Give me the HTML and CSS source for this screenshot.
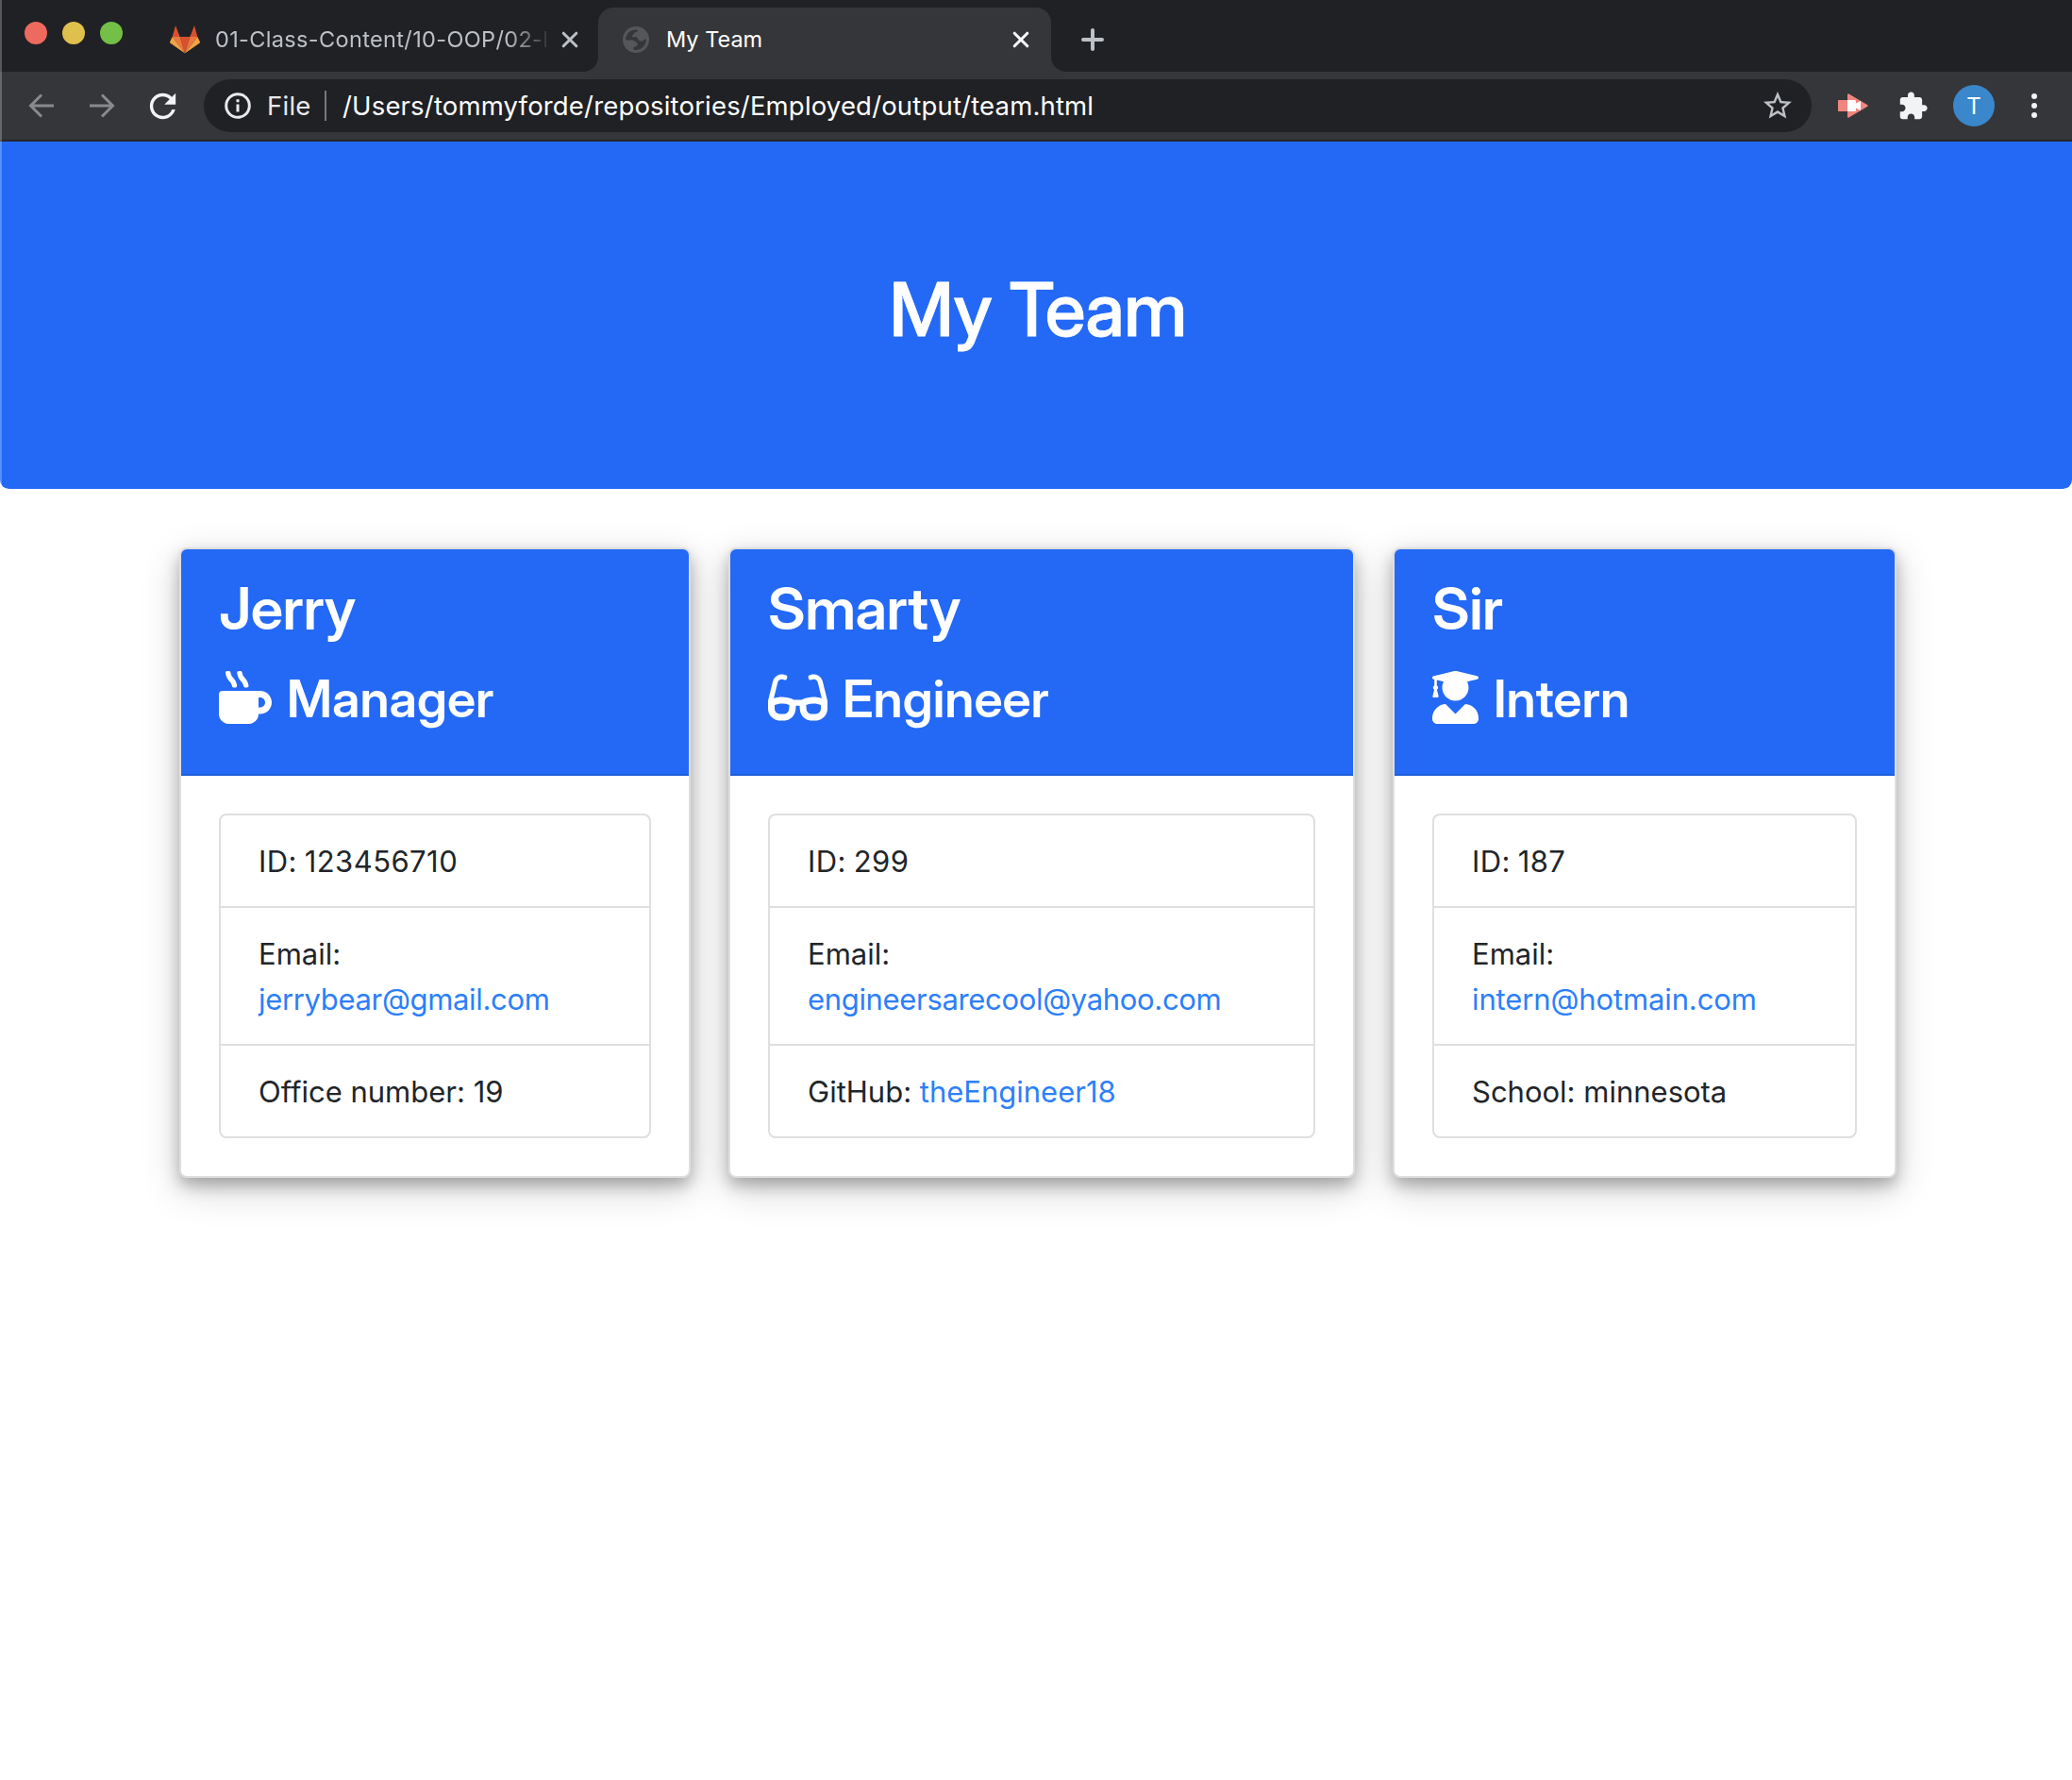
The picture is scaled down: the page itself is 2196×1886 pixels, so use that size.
FILE: index.html
```
<!DOCTYPE html>
<html lang="en">
<head>
  <meta charset="utf-8">
  <title>My Team</title>
  <link rel="stylesheet" href="styles.css">
</head>
<body>
  <div class="window">
    <header class="browser">
      <div class="tabstrip">
        <div class="lights">
          <span class="light light--close"></span>
          <span class="light light--min"></span>
          <span class="light light--max"></span>
        </div>
        <div class="tab">
          <svg class="tab__icon tab__icon--gitlab" viewBox="0 0 32 30">
            <path fill="#d9502f" d="M6 0 10.7 12H2.7zM26 0l3.3 12h-8zM10.7 12h10.6L16 29.6z"/>
            <path fill="#ec7840" d="M2.7 12h8L16 29.6zM29.3 12h-8L16 29.6z"/>
            <path fill="#f3a344" d="M2.7 12 .1 17.2c-.2.6 0 1.2.5 1.6L16 29.6zM29.3 12l2.6 5.2c.2.6 0 1.2-.5 1.6L16 29.6z"/>
          </svg>
          <span class="tab__title tab__title--faded">01-Class-Content/10-OOP/02-H</span>
          <svg class="tab__close" viewBox="0 0 18 18"><path d="M2.2 2.2 15.8 15.8M15.8 2.2 2.2 15.8"/></svg>
        </div>
        <div class="tab tab--active">
          <svg class="tab__icon tab__icon--globe" viewBox="0 0 28 28">
            <circle cx="14" cy="14" r="14" fill="#55565a"/>
            <path fill="#35363a" d="M3.2 14C3.2 8 8 3.4 14 3.4c1.6 0 2.3.8 1.6 1.8-.6.9-1.8.8-2.8 1.2-1.3.5-1 1.6-1.6 2.4-.5.7-1.6.9-1.4 1.9.3 1 2.5.4 4.2.6 2.3.3 2 3.5 4.4 4.2 2 .6 3.1-.4 4.2-1.5.8-.8 2.2-.9 2.2.3 0 5.5-4.6 10.3-10.3 10.7-1.7.1-3-.3-3.2-1.5-.2-1.6 1-1.9 2.4-2.3 1.7-.5 2.3-1.6 1.9-3.2-.4-1.5-1.8-1.5-3-2.3-1.2-.7-1-1.3-2.4-1.3H3.8z"/>
          </svg>
          <span class="tab__title tab__title--current">My Team</span>
          <svg class="tab__close" viewBox="0 0 18 18"><path d="M2.2 2.2 15.8 15.8M15.8 2.2 2.2 15.8"/></svg>
        </div>
        <svg class="newtab" viewBox="0 0 24 24"><path d="M12 2v20M2 12h20"/></svg>
      </div>

      <div class="toolbar">
        <svg class="nav nav--back" viewBox="0 0 28 28"><path d="M27 14H3M14 2.5 2.5 14 14 25.5"/></svg>
        <svg class="nav nav--forward" viewBox="0 0 28 28"><path d="M1 14h24M14 2.5 25.5 14 14 25.5"/></svg>
        <svg class="reload" viewBox="0 0 24 24"><path d="M17.65 6.35C16.2 4.9 14.21 4 12 4c-4.42 0-7.99 3.58-7.99 8s3.57 8 7.99 8c3.73 0 6.84-2.55 7.73-6h-2.08c-.82 2.33-3.04 4-5.65 4-3.31 0-6-2.69-6-6s2.69-6 6-6c1.66 0 3.14.69 4.22 1.78L13 11h7V4l-2.35 2.35z"/></svg>
        <div class="omnibox">
          <svg class="omnibox__info" viewBox="0 0 28 28">
            <circle cx="14" cy="14" r="12.3"/>
            <path d="M14 12.5v8M14 7.3v3"/>
          </svg>
          <span class="omnibox__scheme">File</span>
          <span class="omnibox__divider"></span>
          <span class="omnibox__url">/Users/tommyforde/repositories/Employed/output/team.html</span>
          <svg class="omnibox__star" viewBox="0 0 24 24"><path d="M22 9.24l-7.19-.62L12 2 9.19 8.63 2 9.24l5.46 4.73L5.82 21 12 17.27 18.18 21l-1.63-7.03L22 9.24zM12 15.4l-3.76 2.27 1-4.28-3.32-2.88 4.38-.38L12 6.1l1.71 4.04 4.38.38-3.32 2.88 1 4.28L12 15.4z"/></svg>
        </div>
        <svg class="ext" viewBox="0 0 32 26">
          <path fill="#f0857f" d="M1 7h9V1.2C10 .3 10.7 0 11.5.5L31 12c.9.6.9 1.4 0 2L11.5 25.5c-.8.5-1.5.2-1.500-.7V19H1c-.6 0-1-.4-1-1V8c0-.6.4-1 1-1z"/>
          <path fill="#fff" d="M10 7h7.5c1 0 1.5.5 1.5 1.5v2L24 8v10l-5-2.5v2c0 1-.5 1.5-1.5 1.5H10z"/>
        </svg>
        <svg class="puzzle" viewBox="0 0 24 24"><path d="M20.5 11H19V7c0-1.1-.9-2-2-2h-4V3.5C13 2.12 11.88 1 10.5 1S8 2.12 8 3.5V5H4c-1.1 0-1.99.9-1.99 2v3.8H3.5c1.49 0 2.7 1.21 2.7 2.7s-1.21 2.7-2.7 2.7H2V20c0 1.1.9 2 2 2h3.8v-1.5c0-1.49 1.21-2.7 2.7-2.7 1.49 0 2.7 1.21 2.7 2.7V22H17c1.1 0 2-.9 2-2v-4h1.5c1.38 0 2.5-1.12 2.5-2.5S21.88 11 20.5 11z"/></svg>
        <span class="avatar">T</span>
        <div class="kebab"><span></span><span></span><span></span></div>
      </div>
    </header>

    <section class="jumbotron">
      <h1 class="jumbotron__title">My Team</h1>
    </section>

    <main class="team">
      <article class="card card--manager">
        <div class="card__header">
          <h2 class="card__name">Jerry</h2>
          <h3 class="card__role">
            <svg class="role-icon" width="56" height="56" viewBox="0 0 512 512"><path d="M127.1 146.5c1.3 7.7 8 13.5 16 13.5h16.5c9.8 0 17.6-8.5 16.3-18-3.8-28.2-16.4-54.2-36.6-74.7-14.4-14.7-23.6-33.3-26.4-53.5C111.8 5.9 105 0 96.8 0H80.4C70.6 0 63 8.5 64.1 18c3.9 31.9 18 61.3 40.6 84.4 12 12.2 19.7 27.5 22.4 44.1zm112 0c1.3 7.7 8 13.5 16 13.5h16.5c9.8 0 17.6-8.5 16.3-18-3.8-28.2-16.4-54.2-36.6-74.7-14.4-14.7-23.6-33.3-26.4-53.5C223.8 5.9 217 0 208.8 0h-16.4c-9.8 0-17.5 8.5-16.3 18 3.9 31.9 18 61.3 40.6 84.4 12 12.2 19.7 27.5 22.4 44.1zM400 192H32c-17.7 0-32 14.3-32 32v192c0 53 43 96 96 96h192c53 0 96-43 96-96h16c61.8 0 112-50.2 112-112s-50.2-112-112-112zm0 160h-16v-96h16c26.5 0 48 21.5 48 48s-21.5 48-48 48z"/></svg>
            <span>Manager</span>
          </h3>
        </div>
        <div class="card__body">
          <ul class="list">
            <li class="list__item list__item--id">ID: 123456710</li>
            <li class="list__item">Email: <a class="link link--email" href="mailto:jerrybear@gmail.com">jerrybear@gmail.com</a></li>
            <li class="list__item">Office number: 19</li>
          </ul>
        </div>
      </article>

      <article class="card card--engineer">
        <div class="card__header">
          <h2 class="card__name">Smarty</h2>
          <h3 class="card__role">
            <svg class="role-icon" width="63" height="56" viewBox="0 0 576 512"><path d="M574.1 280.37L528.75 98.66c-5.91-23.7-21.59-44.05-43-55.81-21.44-11.73-46.97-14.11-70.19-6.33l-15.25 5.08c-8.39 2.79-12.92 11.86-10.12 20.24l5.06 15.18c2.79 8.38 11.85 12.91 20.23 10.12l13.18-4.39c10.87-3.62 23-3.57 33.16 1.73 10.29 5.37 17.57 14.56 20.37 25.82l38.46 153.82c-22.19-6.81-49.79-12.46-81.2-12.46-34.77 0-73.98 7.02-114.85 26.74h-73.18c-40.87-19.74-80.08-26.75-114.86-26.75-31.42 0-59.02 5.65-81.21 12.46l38.46-153.83c2.79-11.25 10.09-20.45 20.38-25.81 10.16-5.3 22.28-5.35 33.15-1.73l13.17 4.39c8.38 2.79 17.44-1.74 20.23-10.12l5.06-15.18c2.8-8.38-1.73-17.45-10.12-20.24l-15.25-5.08c-23.22-7.78-48.75-5.41-70.19 6.33-21.41 11.77-37.09 32.11-43 55.8L1.9 280.37A64.218 64.218 0 0 0 0 295.86v70.25C0 429.01 51.58 480 115.2 480h37.12c60.28 0 110.37-45.94 114.88-105.37l2.93-38.63h35.75l2.93 38.63C313.31 434.06 363.4 480 423.68 480h37.12c63.62 0 115.2-50.99 115.2-113.88v-70.25c0-5.23-.64-10.43-1.9-15.5zm-370.72 89.42c-1.97 25.91-24.4 46.21-51.06 46.21H115.2C86.97 416 64 393.62 64 366.11v-37.54c18.12-6.49 43.42-12.92 72.58-12.92 23.86 0 47.26 4.33 69.93 12.92l-3.13 41.22zM512 366.12c0 27.51-22.97 49.88-51.2 49.88h-37.12c-26.67 0-49.1-20.3-51.06-46.21l-3.13-41.22c22.67-8.59 46.08-12.92 69.95-12.92 29.12 0 54.43 6.44 72.55 12.93v37.54z"/></svg>
            <span>Engineer</span>
          </h3>
        </div>
        <div class="card__body">
          <ul class="list">
            <li class="list__item list__item--id">ID: 299</li>
            <li class="list__item">Email: <a class="link link--email" href="mailto:engineersarecool@yahoo.com">engineersarecool@yahoo.com</a></li>
            <li class="list__item">GitHub: <a class="link" href="#">theEngineer18</a></li>
          </ul>
        </div>
      </article>

      <article class="card card--intern">
        <div class="card__header">
          <h2 class="card__name">Sir</h2>
          <h3 class="card__role">
            <svg class="role-icon" width="49" height="56" viewBox="0 0 448 512"><path d="M319.4 320.6L224 416l-95.4-95.4C57.1 323.7 0 382.2 0 454.4v9.6c0 26.5 21.5 48 48 48h352c26.5 0 48-21.5 48-48v-9.6c0-72.2-57.1-130.7-128.6-133.8zM13.6 79.8l6.4 1.5v58.4c-7 4.2-12 11.5-12 20.3 0 8.4 4.6 15.4 11.1 19.7L3.5 242c-1.7 6.9 2.1 14 7.6 14h41.8c5.5 0 9.3-7.1 7.6-14l-15.6-62.3C51.4 175.4 56 168.4 56 160c0-8.8-5-16.1-12-20.3V87.1l66 15.9c-8.6 17.2-14 36.4-14 57 0 70.7 57.3 128 128 128s128-57.3 128-128c0-20.6-5.3-39.8-14-57l96.3-23.2c18.2-4.4 18.2-27.1 0-31.5l-190.4-46c-13-3.1-26.7-3.1-39.7 0L13.6 48.2c-18.1 4.4-18.1 27.2 0 31.6z"/></svg>
            <span>Intern</span>
          </h3>
        </div>
        <div class="card__body">
          <ul class="list">
            <li class="list__item list__item--id">ID: 187</li>
            <li class="list__item">Email: <a class="link link--email" href="mailto:intern@hotmain.com">intern@hotmain.com</a></li>
            <li class="list__item">School: minnesota</li>
          </ul>
        </div>
      </article>
    </main>
  </div>
</body>
</html>
```
FILE: styles.css
```
* {
  box-sizing: border-box;
}

body {
  margin: 0;
  background: #fff;
  color: #212529;
  font-family: Inter, "Liberation Sans", sans-serif;
}

h1, h2, h3, ul {
  margin: 0;
  padding: 0;
}

h1, h2, h3 {
  font-family: "Inter Display", Inter, "Liberation Sans", sans-serif;
  font-weight: 600;
}

svg {
  display: block;
  flex: none;
}

.window {
  position: relative;
  min-height: 1886px;
  overflow: hidden;
}

/* light edge along the left side of the window */
.window::after {
  content: "";
  position: absolute;
  top: 0;
  left: 0;
  width: 2px;
  height: 100%;
  background: rgba(255, 255, 255, .25);
}

/* Tab strip */
.tabstrip {
  display: flex;
  height: 76px;
  padding: 8px 0 0 26px;
  background: #202124;
}

.lights {
  display: flex;
  gap: 16px;
  margin: 15px 50px 0 0;
}

.light {
  width: 24px;
  height: 24px;
  border-radius: 50%;
}

.light--close { background: #ee6a5f; }
.light--min { background: #e0c04c; }
.light--max { background: #74bf47; }

.tab {
  display: flex;
  align-items: center;
  width: 454px;
  height: 68px;
  color: #bdc1c6;
}

.tab--active {
  position: relative;
  width: 480px;
  padding-left: 26px;
  border-radius: 16px 16px 0 0;
  background: #35363a;
  color: #fff;
}

/* flared bottom corners of the active tab */
.tab--active::before,
.tab--active::after {
  content: "";
  position: absolute;
  bottom: 0;
  width: 16px;
  height: 16px;
}

.tab--active::before {
  left: -16px;
  background: radial-gradient(circle at 0 0, transparent 15.5px, #35363a 16.5px);
}

.tab--active::after {
  right: -16px;
  background: radial-gradient(circle at 100% 0, transparent 15.5px, #35363a 16.5px);
}

.tab__icon--gitlab {
  width: 32px;
  height: 30px;
  margin-right: 16px;
}

.tab__icon--globe {
  width: 28px;
  height: 28px;
  margin-right: 18px;
}

.tab__title {
  font-size: 23.5px;
  line-height: 32px;
  white-space: nowrap;
}

.tab__title--faded {
  width: 351px;
  margin-right: 16px;
  overflow: hidden;
  letter-spacing: .35px;
  -webkit-mask-image: linear-gradient(90deg, #000 308px, transparent 360px);
  mask-image: linear-gradient(90deg, #000 308px, transparent 360px);
}

.tab__title--current {
  width: 367px;
}

.tab__close {
  width: 18px;
  height: 18px;
  fill: none;
  stroke: currentColor;
  stroke-width: 3;
  stroke-linecap: round;
}

.newtab {
  width: 24px;
  height: 24px;
  margin: 22px 0 0 32px;
  fill: none;
  stroke: #bdc1c6;
  stroke-width: 4;
  stroke-linecap: round;
}

/* Toolbar */
.toolbar {
  display: flex;
  align-items: center;
  height: 74px;
  padding: 0 37px 0 30px;
  border-bottom: 2px solid #26272b;
  background: #35363a;
}

.nav {
  width: 28px;
  height: 28px;
  fill: none;
  stroke: #898a8d;
  stroke-width: 3;
}

.nav--forward {
  margin-left: 36px;
}

.reload {
  width: 41px;
  height: 41px;
  margin: 0 23px 0 30px;
  fill: #f1f3f4;
}

.omnibox {
  display: flex;
  align-items: center;
  width: 1704px;
  height: 56px;
  padding: 0 18px 0 22px;
  border-radius: 28px;
  background: #202124;
  color: #fff;
  font-size: 27.5px;
}

.omnibox__info {
  width: 28px;
  height: 28px;
  margin-right: 17px;
  fill: none;
  stroke: #e8eaed;
  stroke-width: 3;
}

.omnibox__scheme {
  width: 61px;
  color: #e8eaed;
  letter-spacing: .25px;
}

.omnibox__divider {
  width: 2px;
  height: 32px;
  margin-right: 17px;
  background: #77787b;
}

.omnibox__url {
  flex: 1;
  letter-spacing: .17px;
}

.omnibox__star {
  width: 36px;
  height: 36px;
  fill: #bdc1c6;
}

.ext {
  width: 32px;
  height: 26px;
  margin-left: 28px;
}

.puzzle {
  width: 33px;
  height: 33px;
  margin-left: 31px;
  fill: #f1f3f4;
}

.avatar {
  width: 44px;
  height: 44px;
  margin-left: 26px;
  border-radius: 50%;
  background: #3a87cb;
  color: #fff;
  font-size: 24px;
  line-height: 45px;
  text-align: center;
}

.kebab {
  display: flex;
  flex-direction: column;
  gap: 4px;
  margin-left: 39px;
}

.kebab span {
  width: 6px;
  height: 6px;
  border-radius: 50%;
  background: #f1f3f4;
}

/* Page banner */
.jumbotron {
  height: 368px;
  padding: 130px 64px;
  border-radius: 0 0 9.6px 9.6px;
  background: #2369f6;
  color: #fff;
  text-align: center;
}

.jumbotron__title {
  padding-left: 4px;
  font-size: 78.4px;
  font-weight: 500;
  line-height: 96px;
  letter-spacing: -.6px;
  -webkit-text-stroke: .8px #fff;
}

/* Team cards */
.team {
  display: flex;
  gap: 40px;
  padding: 62px 0 0 190px;
}

.card {
  flex: none;
  border: 2px solid #dfdfdf;
  border-radius: 8px;
  background: #fff;
  box-shadow: 0 8px 16px rgba(0, 0, 0, .26), 0 12px 40px rgba(0, 0, 0, .19);
}

.card--manager { width: 542px; }
.card--engineer { width: 664px; }
.card--intern { width: 534px; }

.card__header {
  height: 240px;
  padding: 24px 40px;
  border-bottom: 2px solid #1e5dd9;
  border-radius: 6px 6px 0 0;
  background: #2369f6;
  color: #fff;
}

.card__name {
  font-size: 62px;
  line-height: 78px;
  letter-spacing: -.5px;
}

.card__role {
  display: flex;
  align-items: center;
  gap: 16px;
  margin-top: 22px;
  font-size: 54.4px;
  line-height: 68px;
}

.role-icon {
  margin-bottom: 2px;
  fill: currentColor;
}

.card__body {
  padding: 40px;
}

.list {
  border: 2px solid #dfdfdf;
  border-radius: 8px;
  list-style: none;
}

.list__item {
  padding: 25px 40px 23px;
  font-size: 31px;
  line-height: 48px;
}

.list__item + .list__item {
  border-top: 2px solid #dfdfdf;
}

.list__item--id {
  letter-spacing: .45px;
  word-spacing: -1.5px;
}

.link {
  color: #2d7ff9;
  text-decoration: none;
}

.link--email {
  display: block;
  letter-spacing: -.33px;
}

.card--intern .link--email { letter-spacing: -.125px; }
```
